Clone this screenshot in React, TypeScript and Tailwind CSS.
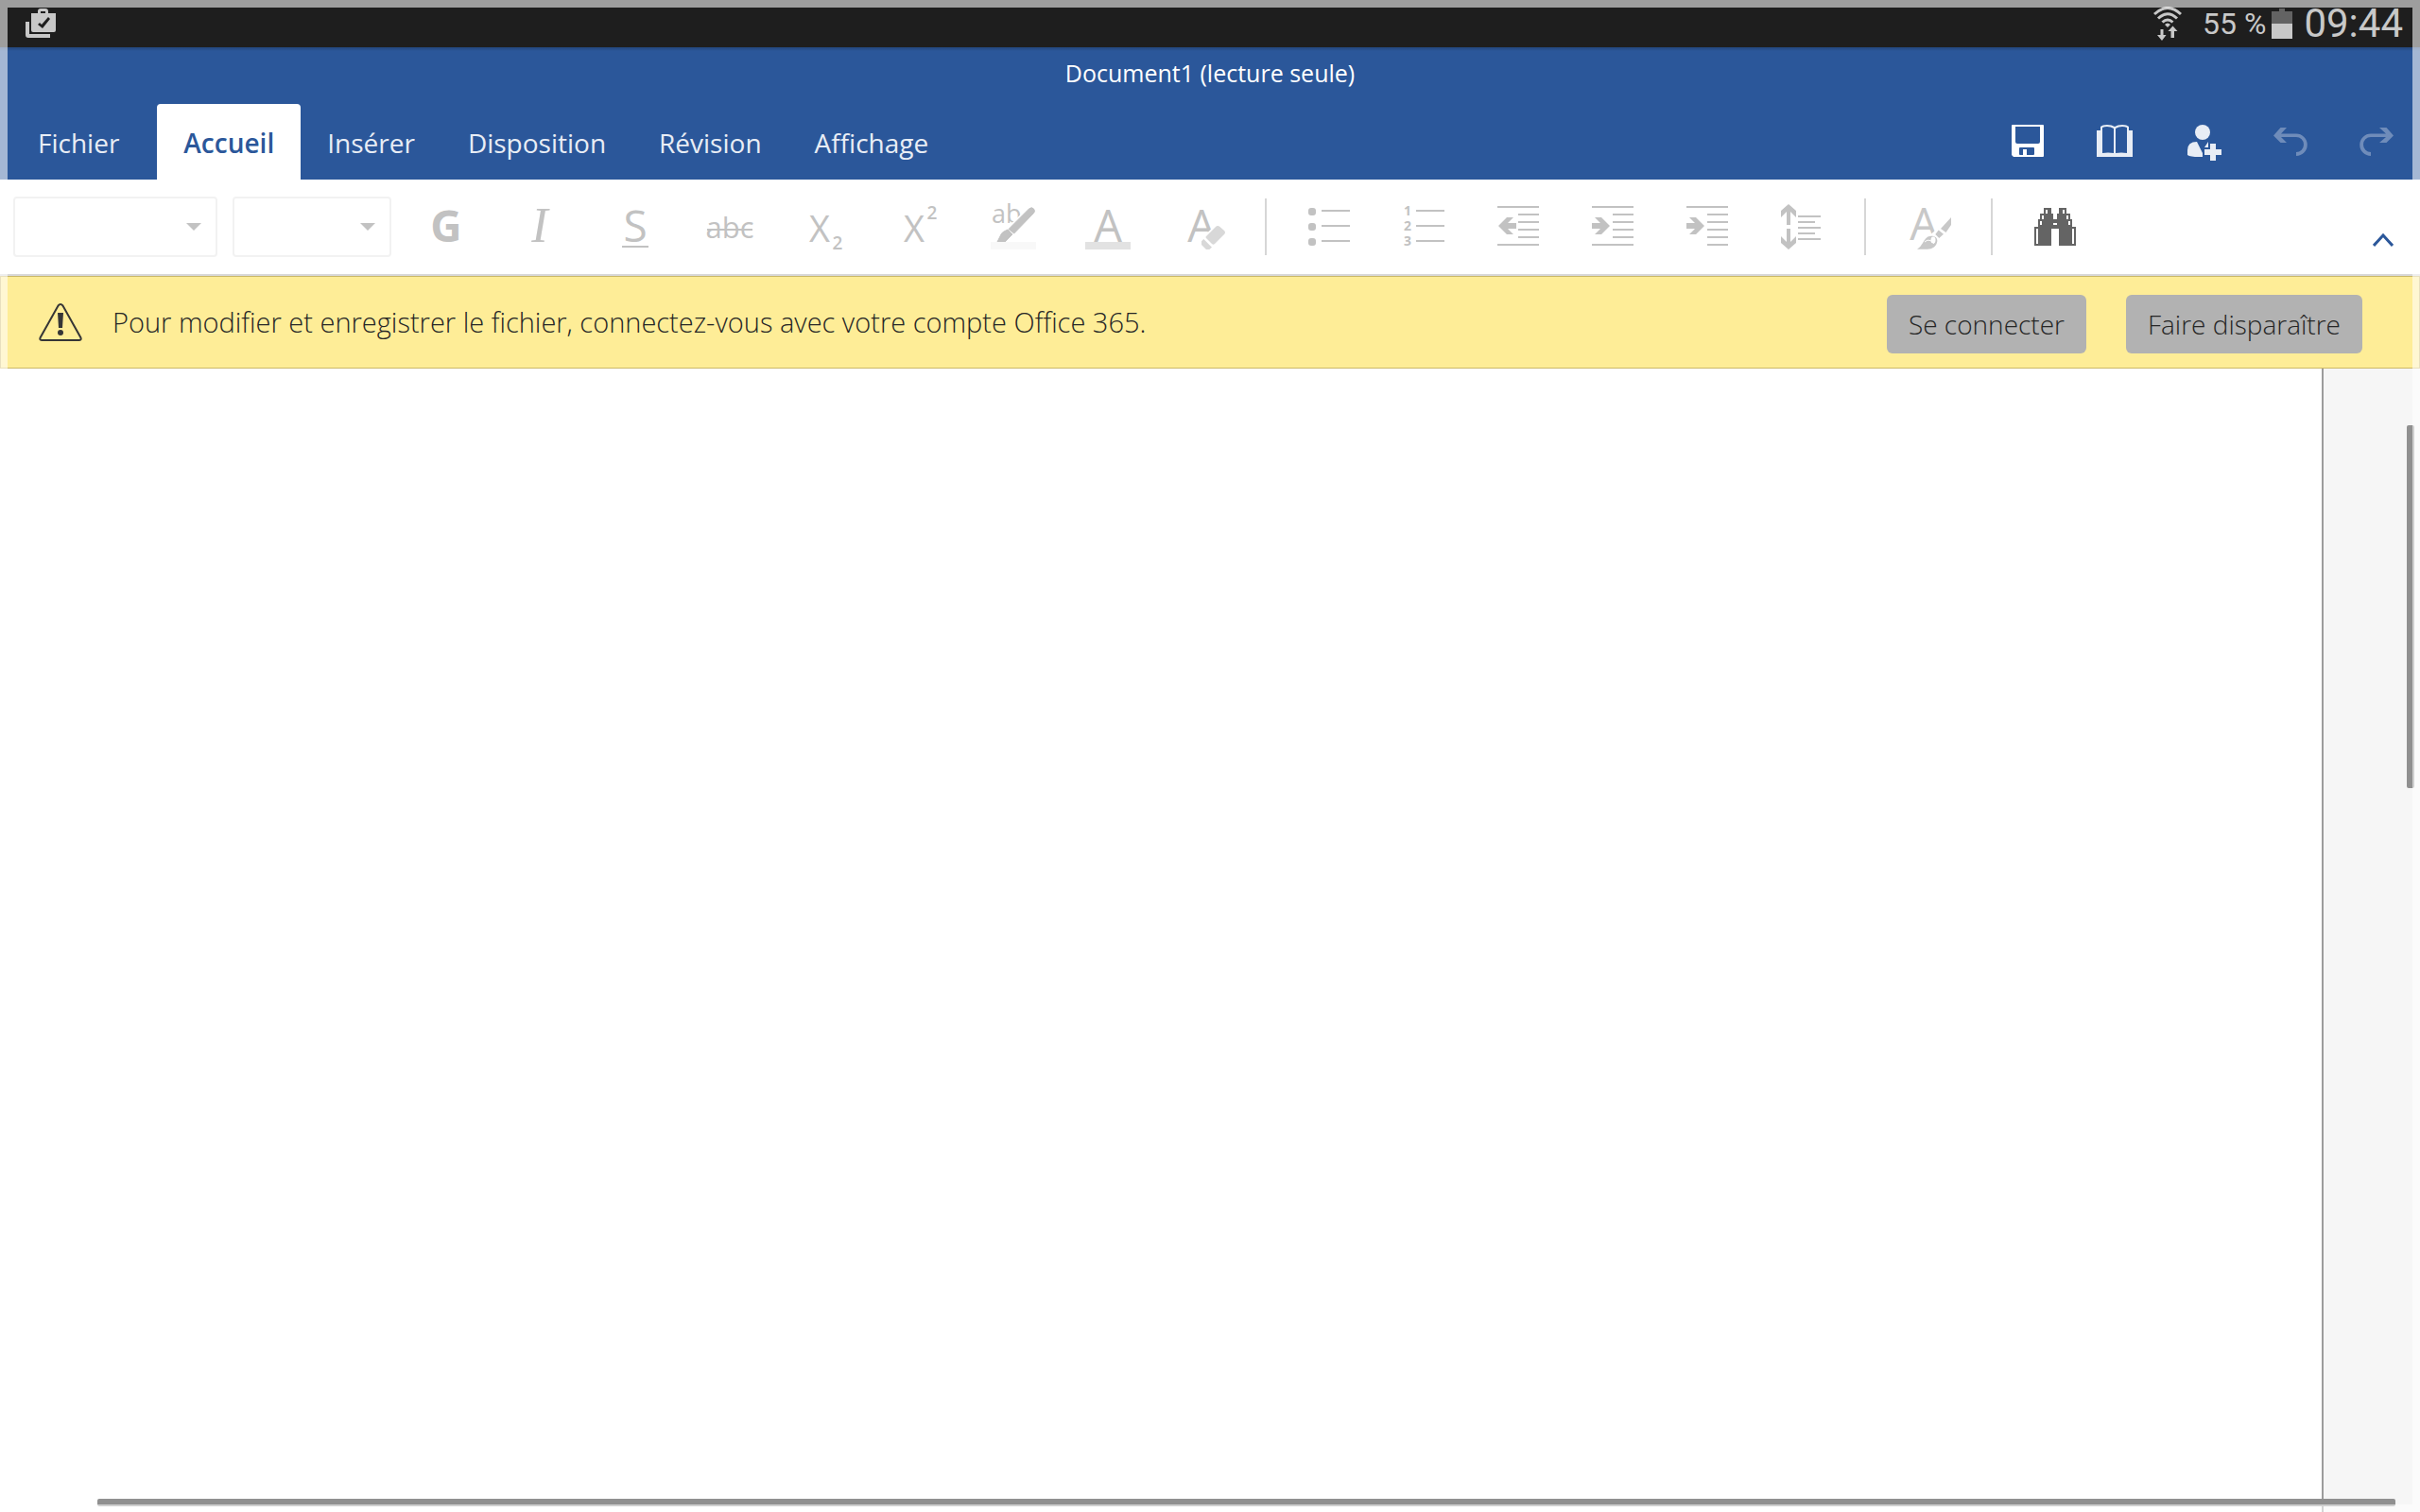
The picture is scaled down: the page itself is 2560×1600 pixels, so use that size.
import type { ReactNode } from 'react';

type IconButtonProps = {
  label: string;
  disabled?: boolean;
  className?: string;
  children: ReactNode;
};

const tabs = ['Insérer', 'Disposition', 'Révision', 'Affichage'];

function Icon({ children }: { children: ReactNode }) {
  return (
    <svg viewBox="0 0 48 48" className="size-12 shrink-0 overflow-visible" fill="currentColor" aria-hidden="true">
      {children}
    </svg>
  );
}

function ToolButton({ label, disabled = true, className = 'text-[#c2c2c2]', children }: IconButtonProps) {
  return (
    <button
      type="button"
      aria-label={label}
      disabled={disabled}
      className={`flex h-full w-[100px] shrink-0 items-center justify-center ${className}`}
    >
      <Icon>{children}</Icon>
    </button>
  );
}

function HeaderButton({ label, disabled = false, className = 'text-[#e8edf5]', children }: IconButtonProps) {
  return (
    <button
      type="button"
      aria-label={label}
      disabled={disabled}
      className={`flex h-full w-[92px] shrink-0 items-center justify-center ${className}`}
    >
      <Icon>{children}</Icon>
    </button>
  );
}

function Divider() {
  return <div className="mx-4 h-[60px] w-0.5 shrink-0 bg-[#d6d6d6]" />;
}

function Dropdown({ label, className }: { label: string; className: string }) {
  return (
    <div className={`relative h-16 shrink-0 ${className}`}>
      <select
        aria-label={label}
        disabled
        className="h-full w-full appearance-none rounded border-2 border-[#f2f2f2] bg-white opacity-100"
      />
      <svg viewBox="0 0 16 8" className="pointer-events-none absolute top-7 right-[17px] h-2 w-4 fill-[#c2c2c2]" aria-hidden="true">
        <path d="M0 0h16L8 8z" />
      </svg>
    </div>
  );
}

function StatusBar() {
  return (
    <div className="flex h-[50px] items-center justify-between bg-[#1e1e1e] pr-[18px] pl-[27px] font-[Roboto,sans-serif] text-[#c8c8c8]">
      <svg viewBox="0 0 32 32" className="size-8" fill="currentColor" aria-hidden="true">
        <path d="M0 14h4v13h22v4H3q-3 0-3-3z" />
        <path
          fillRule="evenodd"
          d="M13 5V3q0-3 3-3h5q3 0 3 3v2h8v18q0 2-2 2H8q-2 0-2-2V5zm3 0h5V3h-5zM15 15l-2 2 5 4 8-10-2-2-7 8z"
        />
      </svg>
      <div className="flex items-center">
        <svg viewBox="0 0 30 36" className="mr-[22px] h-9 w-[30px]" fill="none" stroke="currentColor" strokeWidth="3" aria-hidden="true">
          <path d="M1 8Q15-5 29 8M5 12.500Q15 3 25 12.500M9.500 16.500Q15 11.500 20.500 16.500" />
          <path d="M15 22l-3-3q3-3 6 0z" fill="currentColor" stroke="none" />
          <path d="M7.500 24h3v6h3L9 36l-5-6h3.500zM18.500 33v-7h-3l5-5.500 5 5.500h-3.500v7z" fill="currentColor" stroke="none" />
        </svg>
        <span className="text-[32px] leading-[48px]">55 %</span>
        <svg viewBox="0 0 22 32" className="mr-3 ml-1.5 h-8 w-[22px]" aria-hidden="true">
          <path d="M8 0h6v3h8v13H0V3h8z" fill="#636363" />
          <path d="M0 16h22v16H0z" fill="currentColor" />
        </svg>
        <span className="text-[42px] leading-[48px]">09:44</span>
      </div>
    </div>
  );
}

function Header() {
  return (
    <header className="bg-[#2b579a] text-[#e8edf5]">
      <div className="h-1 bg-linear-to-b from-black/20 to-transparent" />
      <h1 className="h-14 text-center text-[25px] leading-[46px] text-white">Document1 (lecture seule)</h1>
      <div className="flex h-20 items-stretch justify-between">
        <nav className="flex text-[28px] leading-[82px]">
          <a href="#fichier" className="px-10">
            Fichier
          </a>
          <a href="#accueil" aria-current="page" className="rounded-t bg-white px-7 font-semibold text-[#2b579a]">
            Accueil
          </a>
          {tabs.map((tab) => (
            <a key={tab} href={`#${tab.toLowerCase()}`} className="px-7">
              {tab}
            </a>
          ))}
        </nav>
        <div className="flex">
          <HeaderButton label="Enregistrer" className="text-white">
            <path
              fillRule="evenodd"
              d="M7 6h32q1 0 1 1v32q0 1-1 1H8l-2-2V7q0-1 1-1zM10 8v16q0 2 2 2h22q2 0 2-2V8zM15 30q-1 0-1 1v6q0 1 1 1h3v-6h4v6h7q1 0 1-1v-6q0-1-1-1z"
            />
          </HeaderButton>
          <HeaderButton label="Lecture">
            <path
              fillRule="evenodd"
              d="M4 12h4V8q2-2 7-2 5 0 8 2 3-2 8-2 5 0 7 2v4h4v28H4zM10 9v27q6-1 12 0V10q-3-2-7-2-3 0-5 1zM24 10v26q6-1 12 0V9q-2-1-5-1-4 0-7 2z"
            />
          </HeaderButton>
          <HeaderButton label="Partager">
            <circle cx="24" cy="14" r="8" />
            <path d="M8 38v-5q0-9 10-9l6 12v4h-4q-9 0-12-2zM30 24v6h-4zM32 26h6v6h6v6h-6v6h-6v-6h-6v-6h6z" />
          </HeaderButton>
          <HeaderButton label="Annuler" disabled className="text-[#6f8cba]">
            <path d="M7 17.500L14.500 9H21l-6 6.500h16A11.700 11.700 0 0 1 31 39v-4A8 8 0 0 0 31 19H15l6 6h-6.500z" />
          </HeaderButton>
          <HeaderButton label="Rétablir" disabled className="text-[#6f8cba]">
            <path d="M42 17.500L34.500 9H27l7 6.500H18A11.700 11.700 0 0 0 18 39v-4A8 8 0 0 1 18 19h16l-7 6h7.500z" />
          </HeaderButton>
        </div>
      </div>
    </header>
  );
}

function Toolbar() {
  return (
    <div className="flex h-[102px] items-center border-b-2 border-[#d8d8d8] bg-white pl-3.5" role="toolbar">
      <Dropdown label="Police" className="w-[216px]" />
      <Dropdown label="Taille" className="mr-2 ml-4 w-[168px]" />

      <ToolButton label="Gras">
        <text x="24" y="40" textAnchor="middle" fontSize="46" fontWeight="700">G</text>
      </ToolButton>
      <ToolButton label="Italique">
        <text x="23" y="40" textAnchor="middle" fontSize="52" fontStyle="italic" fontFamily="Liberation Serif, serif">I</text>
      </ToolButton>
      <ToolButton label="Souligné">
        <text x="24" y="40" textAnchor="middle" fontSize="46">S</text>
        <path d="M10 44h28v2H10z" />
      </ToolButton>
      <ToolButton label="Barré">
        <text x="24" y="36" textAnchor="middle" fontSize="31">abc</text>
        <path d="M0 26h48v2H0z" />
      </ToolButton>
      <ToolButton label="Indice">
        <text x="19" y="40" textAnchor="middle" fontSize="38">X</text>
        <text x="38" y="48" textAnchor="middle" fontSize="19" fontWeight="600">2</text>
      </ToolButton>
      <ToolButton label="Exposant">
        <text x="19" y="40" textAnchor="middle" fontSize="38">X</text>
        <text x="38" y="16" textAnchor="middle" fontSize="19" fontWeight="600">2</text>
      </ToolButton>
      <ToolButton label="Surlignage">
        <text x="1" y="20" fontSize="27">ab</text>
        <path d="M16 26L42 1l9 6-26 28z" fill="#fff" />
        <path d="M19 26.500L40.500 5q3-2.500 5 0t0 4.500L24.700 31zM7 40l4-8q1-2 3-3l4-2 5 5-8 8z" stroke="currentColor" strokeWidth="1" />
        <path d="M0 40h48v8H0z" fill="#f8f8f8" />
      </ToolButton>
      <ToolButton label="Couleur de police">
        <text x="24" y="40" textAnchor="middle" fontSize="47">A</text>
        <path d="M0 40h48v8H0z" fill="#e2e2e2" />
      </ToolButton>
      <ToolButton label="Effacer la mise en forme">
        <text x="23" y="40" textAnchor="middle" fontSize="47">A</text>
        <path d="M22 37l17-16h4l7 7v4L35 50h-7l-6-7z" fill="#fff" />
        <path
          d="M28 34l10-10q2-2 4.500 0L47 28q2 2 0 4L37 42q-1.500 1.500-3 0l-6-6q-1-1 0-2zM25.300 37L34 45.700 31.300 48H28l-5-5v-3.700z"
          fill="#d8d8d8"
        />
      </ToolButton>

      <Divider />

      <ToolButton label="Puces">
        <rect x="2" y="4" width="8" height="8" rx="3" />
        <rect x="2" y="20" width="8" height="8" rx="3" />
        <rect x="2" y="36" width="8" height="8" rx="3" />
        <path d="M16 6h30v2H16zM16 22h30v2H16zM16 38h30v2H16z" />
      </ToolButton>
      <ToolButton label="Numérotation">
        <g fontSize="14" fontWeight="700">
          <text x="3" y="12">1</text>
          <text x="3" y="28">2</text>
          <text x="3" y="44">3</text>
        </g>
        <path d="M16 6h30v2H16zM16 22h30v2H16zM16 38h30v2H16z" />
      </ToolButton>
      <ToolButton label="Diminuer le retrait">
        <path d="M2 2h44v2H2zM24 10h22v2H24zM24 18h22v2H24zM24 26h22v2H24zM24 34h22v2H24zM2 42h44v2H2z" />
        <path d="M3 23l9-9h7l-6 6h9v6h-9l6 6h-7z" />
      </ToolButton>
      <ToolButton label="Augmenter le retrait">
        <path d="M2 2h44v2H2zM24 10h22v2H24zM24 18h22v2H24zM24 26h22v2H24zM24 34h22v2H24zM2 42h44v2H2z" />
        <path d="M21 23l-9-9H5l6 6H2v6h9l-6 6h7z" />
      </ToolButton>
      <ToolButton label="Retrait de première ligne">
        <path d="M2 2h44v2H2zM24 10h22v2H24zM24 18h22v2H24zM24 26h22v2H24zM24 34h22v2H24zM24 42h22v2H24z" />
        <path d="M21 23l-9-9H5l6 6H2v6h9l-6 6h7z" />
      </ToolButton>
      <ToolButton label="Interligne">
        <path d="M10 0l8 7v7l-6-6v14H8V8l-6 6V7zM10 48l8-7v-7l-6 6V26H8v14l-6-6v7z" />
        <path d="M20 12h24v2H20zM20 18h18v2H20zM20 24h24v2H20zM20 30h18v2H20zM20 36h24v2H20z" />
      </ToolButton>

      <Divider />

      <ToolButton label="Styles" className="text-[#c8c8c8]">
        <text x="19" y="38" textAnchor="middle" fontSize="47">A</text>
        <path d="M24 34l26-22v36H14z" fill="#fff" />
        <path d="M48 14v8l-5.500 8-5.500-4zM34.700 27.500L40 31.700 35.300 36l-4-4z" />
        <path d="M12 47.700c7-4 7-14 15-14 6 0 7 4 6 7-1 4-5 7-10 7z" />
        <ellipse cx="29" cy="38" rx="2.500" ry="3.500" fill="#fff" />
        <path d="M20 40q3-3 6-1.500 3 1.500 4 3.500" fill="none" stroke="#fff" strokeWidth="1" />
      </ToolButton>

      <Divider />

      <ToolButton label="Rechercher" disabled={false} className="text-[#646464]">
        <path d="M12 4h8v6h2v6h4v-6h2V4h8v6h4v6h2v8h4v20H28V26h-8v18H2V24h4v-8h2v-6h4z" />
        <path
          d="M14 6h2v4h-2zM10 12h2v4h-2zM8 18h2v4H8zM4 26h2v16H4zM32 6h2v4h-2zM36 12h2v4h-2zM38 18h2v4h-2zM42 26h2v16h-2zM22 20h4v2h-4z"
          fill="#fff"
        />
      </ToolButton>

      <button type="button" aria-label="Réduire le ruban" className="mr-7 ml-auto pt-7 text-[#2b579a]">
        <svg viewBox="0 0 22 14" className="h-3.5 w-[22px]" fill="none" stroke="currentColor" strokeWidth="3" aria-hidden="true">
          <path d="M1 13L11 2l10 11" />
        </svg>
      </button>
    </div>
  );
}

function SignInBanner() {
  return (
    <div className="flex h-[98px] items-center border border-[#cbb868] bg-[#feed97] pr-[60px] pl-10 text-[28px] font-light text-[#262626]">
      <svg viewBox="0 0 46 40" className="mr-8 h-10 w-[46px] shrink-0 text-[#363636]" aria-hidden="true">
        <path d="M20.500 2.500q2.500-3 5 0l19 34q.8 2.500-2 2.500h-39q-2.800 0-2-2.500z" fill="none" stroke="currentColor" strokeWidth="2" />
        <path d="M20 10h6l-1 16h-4z" fill="currentColor" />
        <circle cx="23" cy="31" r="3" fill="currentColor" />
      </svg>
      <p className="flex-1 text-[29px]">Pour modifier et enregistrer le fichier, connectez-vous avec votre compte Office 365.</p>
      <div className="flex gap-[42px] pt-1">
        <button type="button" className="h-[62px] rounded-md bg-[#b2b2b2] px-[23px]">
          Se connecter
        </button>
        <button type="button" className="h-[62px] rounded-md bg-[#b2b2b2] px-[23px]">
          Faire disparaître
        </button>
      </div>
    </div>
  );
}

export default function App() {
  return (
    <div className="relative flex min-h-screen flex-col overflow-hidden bg-white font-['Open_Sans',sans-serif]">
      <StatusBar />
      <Header />
      <Toolbar />
      <SignInBanner />

      <main className="relative flex flex-1">
        <div className="flex-1 bg-white" />
        <div className="w-[104px] border-l-2 border-[#9c9c9c] bg-[#f6f6f6]" />
        <div className="absolute top-[60px] right-1.5 h-96 w-2 rounded-xs bg-[#909090]" />
        <div className="absolute right-[26px] bottom-1.5 left-[103px] h-2 rounded-xs bg-[#909090]" />
      </main>

      <div className="pointer-events-none absolute inset-0 border-8 border-white/57" />
    </div>
  );
}
